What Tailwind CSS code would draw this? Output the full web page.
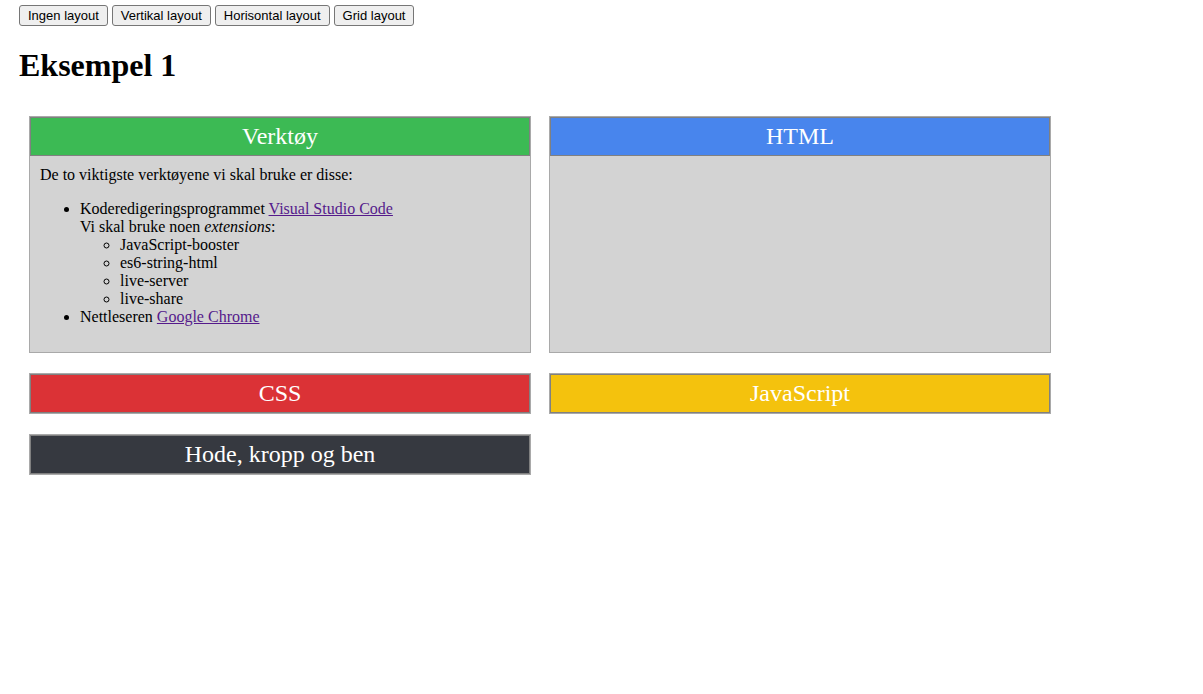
<!DOCTYPE html>
<html lang="no">
<head>
<meta charset="utf-8">
<title>Eksempel 1</title>
<script src="https://cdn.jsdelivr.net/npm/@tailwindcss/browser@4"></script>
</head>
<body class="bg-white px-[19px] pt-[5px] font-['Liberation_Serif',serif] text-base leading-[18px] text-black">
<nav class="flex flex-wrap gap-1 font-['Liberation_Sans',sans-serif] text-[13px] leading-[15px]">
  <button type="button" class="rounded-[3px] border border-[#767676] bg-[#efefef] px-2 py-[2px]">Ingen layout</button>
  <button type="button" class="rounded-[3px] border border-[#767676] bg-[#efefef] px-2 py-[2px]">Vertikal layout</button>
  <button type="button" class="rounded-[3px] border border-[#767676] bg-[#efefef] px-2 py-[2px]">Horisontal layout</button>
  <button type="button" class="rounded-[3px] border border-[#767676] bg-[#efefef] px-2 py-[2px]">Grid layout</button>
</nav>
<h1 class="mt-[21px] text-[32px] leading-9 font-bold">Eksempel 1</h1>
<main class="mx-[10px] mt-[33px] grid max-w-[1022px] grid-cols-2 gap-x-[18px] gap-y-5">
  <section class="border border-[#a9a9a9] bg-[#d3d3d3]">
    <h2 class="border border-[#808080] bg-[#3cba54] py-[5px] text-center text-2xl leading-[27px] text-white">Verktøy</h2>
    <div class="px-[10px] pt-[10px] pb-[26px]">
      <p>De to viktigste verktøyene vi skal bruke er disse:</p>
      <ul class="mt-4 list-disc pl-10">
        <li>Koderedigeringsprogrammet <a href="#" class="text-[#551a8b] underline">Visual Studio Code</a><br>
          Vi skal bruke noen <i>extensions</i>:
          <ul class="list-[circle] pl-10">
            <li>JavaScript-booster</li>
            <li>es6-string-html</li>
            <li>live-server</li>
            <li>live-share</li>
          </ul>
        </li>
        <li>Nettleseren <a href="#" class="text-[#551a8b] underline">Google Chrome</a></li>
      </ul>
    </div>
  </section>
  <section class="border border-[#a9a9a9] bg-[#d3d3d3]">
    <h2 class="border border-[#808080] bg-[#4885ed] py-[5px] text-center text-2xl leading-[27px] text-white">HTML</h2>
  </section>
  <section class="border border-[#a9a9a9] bg-[#d3d3d3]">
    <h2 class="border border-[#808080] bg-[#db3236] py-[5px] text-center text-2xl leading-[27px] text-white">CSS</h2>
  </section>
  <section class="border border-[#a9a9a9] bg-[#d3d3d3]">
    <h2 class="border border-[#808080] bg-[#f4c20d] py-[5px] text-center text-2xl leading-[27px] text-white">JavaScript</h2>
  </section>
  <section class="border border-[#a9a9a9] bg-[#d3d3d3]">
    <h2 class="border border-[#808080] bg-[#363940] py-[5px] text-center text-2xl leading-[27px] text-white">Hode, kropp og ben</h2>
  </section>
</main>
</body>
</html>
